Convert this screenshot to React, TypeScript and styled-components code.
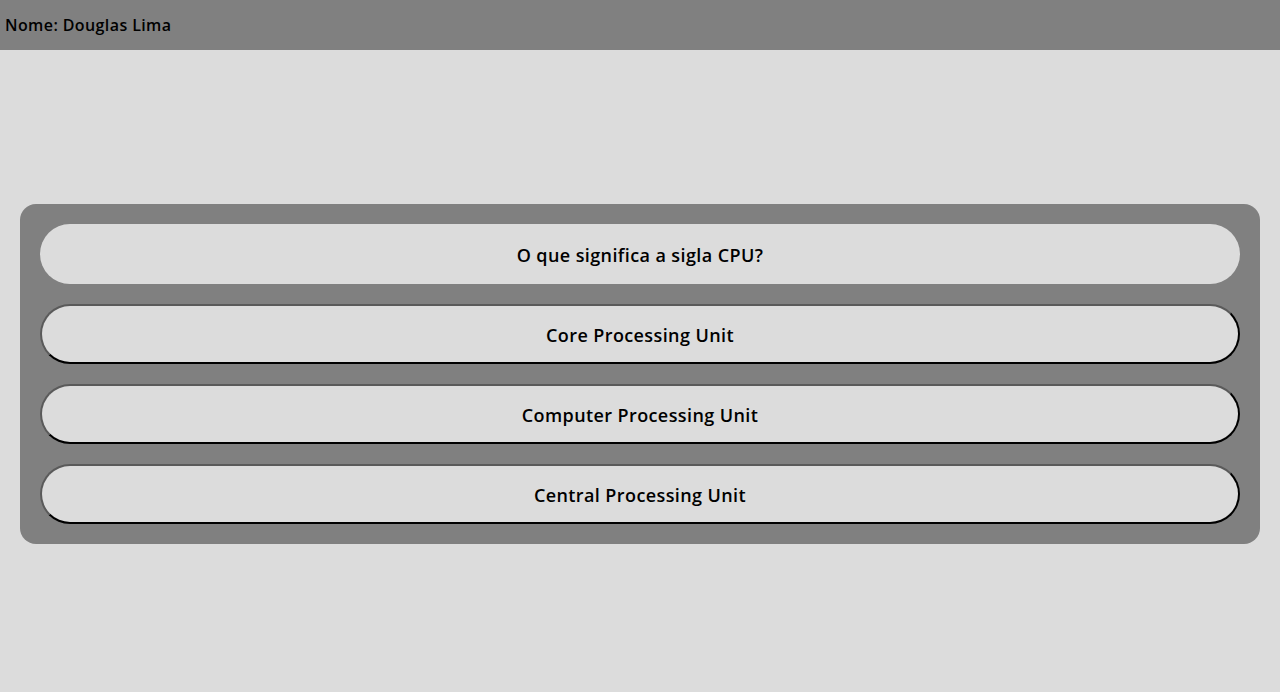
import React from "react";
import styled, { createGlobalStyle } from "styled-components";

const Global = createGlobalStyle`
  * { box-sizing: border-box; }
  html, body { margin: 0; padding: 0; }
  body {
    background: #dcdcdc;
    font-family: "Open Sans", "Liberation Sans", sans-serif;
    color: #000;
  }
`;

const Header = styled.header`
  height: 50px;
  background: #808080;
  display: flex;
  align-items: center;
  padding-left: 5px;
  font-size: 16px;
  font-weight: 600;
  letter-spacing: 0.4px;
`;

const Main = styled.main`
  padding: 154px 20px 0;
`;

const Card = styled.section`
  background: #808080;
  border-radius: 16px;
  padding: 20px;
  display: flex;
  flex-direction: column;
  gap: 20px;
`;

const Question = styled.div`
  height: 60px;
  border-radius: 30px;
  background: #dcdcdc;
  display: flex;
  align-items: center;
  justify-content: center;
  padding-top: 1px;
  font-size: 18px;
  font-weight: 600;
  letter-spacing: 0.4px;
`;

const Option = styled.button`
  height: 60px;
  border-radius: 30px;
  background: #dcdcdc;
  border-width: 2px;
  border-style: solid;
  border-color: #5a5a5a #000 #000 #5a5a5a;
  font-family: inherit;
  font-size: 18px;
  font-weight: 600;
  letter-spacing: 0.4px;
  color: #000;
  cursor: pointer;
  padding: 1px 0 0;
`;

const options = ["Core Processing Unit", "Computer Processing Unit", "Central Processing Unit"];

export default function App() {
  return (
    <>
      <Global />
      <Header>Nome: Douglas Lima</Header>
      <Main>
        <Card>
          <Question>O que significa a sigla CPU?</Question>
          {options.map((o) => (
            <Option key={o}>{o}</Option>
          ))}
        </Card>
      </Main>
    </>
  );
}
